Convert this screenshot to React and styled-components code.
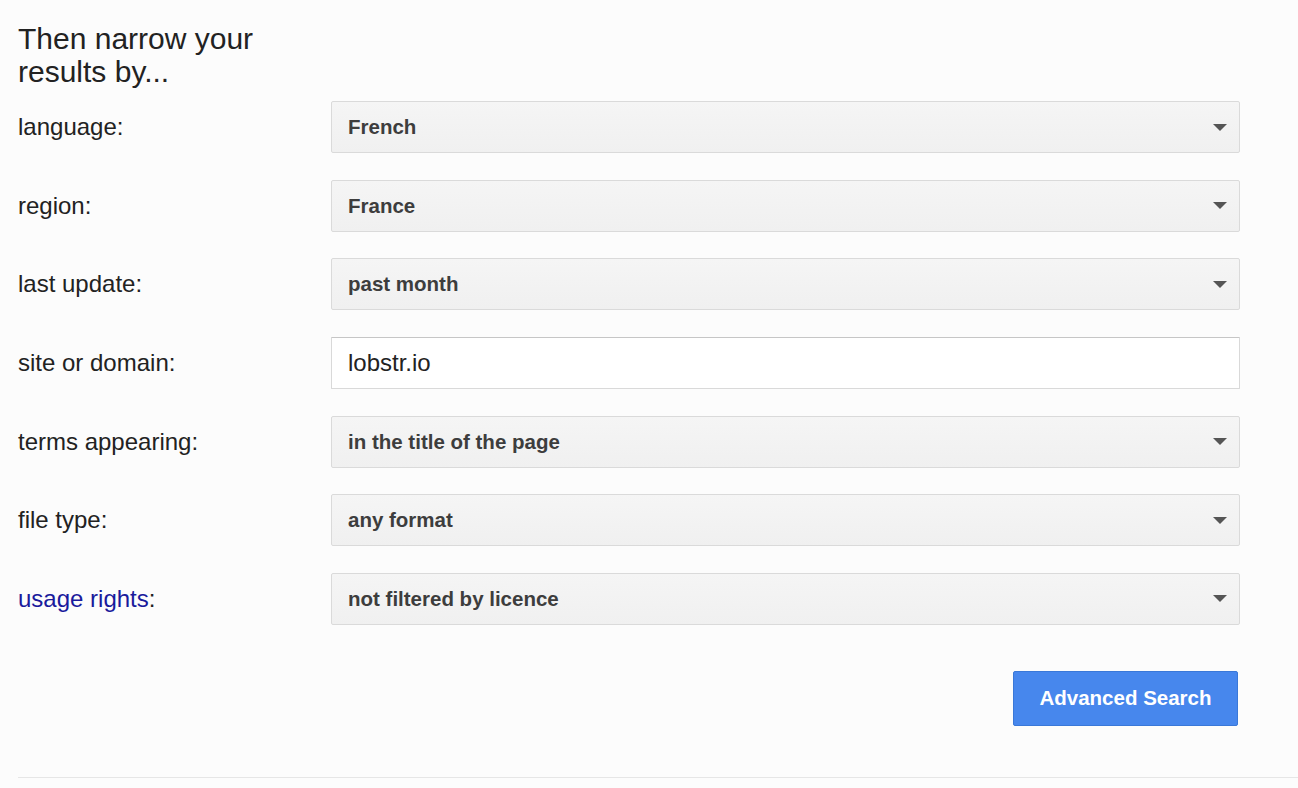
import styled, { createGlobalStyle } from "styled-components";

const Global = createGlobalStyle`
  html, body {
    margin: 0;
    padding: 0;
    background: #fcfcfc;
    font-family: "Liberation Sans", Arial, sans-serif;
  }
`;

const Page = styled.div`
  padding: 22px 0 0 18px;
  width: 1280px;
`;

const Heading = styled.h2`
  margin: 0 0 13px 0;
  font-size: 30px;
  line-height: 33px;
  font-weight: normal;
  color: #222;
  width: 260px;
`;

const Rows = styled.div`
  display: flex;
  flex-direction: column;
  gap: 26.67px;
`;

const Row = styled.div`
  display: grid;
  grid-template-columns: 313px 909px;
  align-items: center;
`;

const Label = styled.div`
  font-size: 24px;
  color: #222;
`;

const Link = styled.span`
  color: #1a1a9c;
`;

const Select = styled.div`
  box-sizing: border-box;
  height: 52px;
  display: flex;
  align-items: center;
  justify-content: space-between;
  padding: 0 12px 0 16px;
  border: 1px solid #dadada;
  border-radius: 2px;
  background: linear-gradient(#f5f5f5, #f0f0f0);
  font-size: 20.5px;
  font-weight: bold;
  color: #3d3d3d;
`;

const Input = styled.div`
  box-sizing: border-box;
  height: 52px;
  display: flex;
  align-items: center;
  padding: 0 16px 0 16px;
  border: 1px solid #d9d9d9;
  border-top-color: #c6c6c6;
  border-radius: 1px;
  background: #fff;
  font-size: 24px;
  color: #222;
`;

const Actions = styled.div`
  display: flex;
  justify-content: flex-end;
  width: 1220px;
  margin-top: 46px;
`;

const Button = styled.button`
  box-sizing: border-box;
  width: 225px;
  height: 55px;
  border: 1px solid #3a78d8;
  border-radius: 2px;
  background: #4787ed;
  color: #fff;
  font-family: "Liberation Sans", Arial, sans-serif;
  font-size: 20.5px;
  font-weight: bold;
`;

const Divider = styled.div`
  margin-top: 51px;
  height: 1px;
  background: #e6e6e6;
`;

const Arrow = () => (
  <svg width="14" height="7" viewBox="0 0 14 7">
    <path d="M0 0 L14 0 L7 7 Z" fill="#555" />
  </svg>
);

const fields = [
  { label: "language:", value: "French" },
  { label: "region:", value: "France" },
  { label: "last update:", value: "past month" },
  { label: "site or domain:", value: "lobstr.io", input: true },
  { label: "terms appearing:", value: "in the title of the page" },
  { label: "file type:", value: "any format" },
  { label: "usage rights", link: true, value: "not filtered by licence" },
];

export default function App() {
  return (
    <Page>
      <Global />
      <Heading>Then narrow your results by...</Heading>
      <Rows>
        {fields.map((f) => (
          <Row key={f.label}>
            <Label>
              {f.link ? (
                <>
                  <Link>{f.label}</Link>:
                </>
              ) : (
                f.label
              )}
            </Label>
            {f.input ? (
              <Input>{f.value}</Input>
            ) : (
              <Select>
                {f.value}
                <Arrow />
              </Select>
            )}
          </Row>
        ))}
      </Rows>
      <Actions>
        <Button>Advanced Search</Button>
      </Actions>
      <Divider />
    </Page>
  );
}
